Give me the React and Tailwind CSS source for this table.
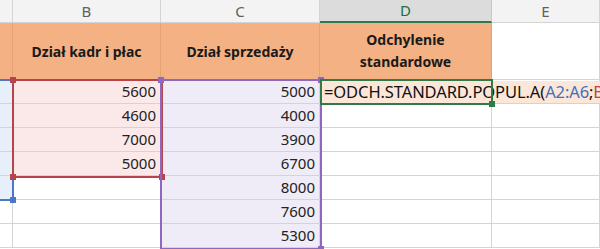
const cols = ['', 'B', 'C', 'D', 'E'];

const rows = [
  [null, '5600', '5000'],
  [null, '4600', '4000'],
  [null, '7000', '3900'],
  [null, '5000', '6700'],
  [null, '', '8000'],
  [null, '', '7600'],
  [null, '', '5300'],
];

// corner squares of a reference range, placed on the range frame
const Handle = ({ className }) => (
  <div className={`absolute w-[6px] h-[6px] ${className}`}></div>
);

const App = () => {
  return (
    <div className="w-[600px] h-[249px] overflow-hidden bg-white" style={{ fontFamily: '"Noto Sans", "Liberation Sans", sans-serif' }}>
      <div className="relative grid grid-cols-[13px_148px_159px_172px_108px] grid-rows-[23px_57px_repeat(7,24px)] w-[600px]">
        {/* column letters */}
        {cols.map((c, i) => (
          <div
            key={c + i}
            className={`flex items-center justify-center text-[15px] border-r border-b ${
              c === 'D'
                ? 'bg-[#dcdcdc] text-[#1e6e3f] border-r-[#c8c8c8] border-b-2 border-b-[#2f7a4a]'
                : 'bg-[#f3f3f3] text-[#5f5f5f] border-[#d4d4d4]'
            }`}
          >
            {c}
          </div>
        ))}

        {/* row 1 headers */}
        <div className="bg-[#f4b183] border-r border-b border-[#e5a273]"></div>
        <div className="bg-[#f4b183] border-r border-b border-[#e5a273] flex items-center justify-center font-bold text-[14px] text-[#1a1a1a]">
          Dział kadr i płac
        </div>
        <div className="bg-[#f4b183] border-r border-b border-[#e5a273] flex items-center justify-center font-bold text-[14px] text-[#1a1a1a]">
          Dział sprzedaży
        </div>
        <div className="bg-[#f4b183] border-r border-b border-[#e5a273] flex flex-col items-center justify-center font-bold text-[14px] leading-[22px] text-[#1a1a1a]">
          <span>Odchylenie</span>
          <span>standardowe</span>
        </div>
        <div className="bg-white border-r border-b border-[#d4d4d4]"></div>

        {/* data rows */}
        {rows.map((r, i) => (
          <div key={i} className="contents">
            <div className={`border-r border-b border-[#d4d4d4] ${i < 5 ? 'bg-[#e7effb]' : 'bg-white'}`}></div>
            <div className={`border-r border-b border-[#d4d4d4] flex items-center justify-end pr-[4px] text-[15px] text-[#222] ${i < 4 ? 'bg-[#fbe9e9]' : 'bg-white'}`}>
              {r[1]}
            </div>
            <div className="border-r border-b border-[#d4d4d4] flex items-center justify-end pr-[4px] text-[15px] text-[#222] bg-[#efebf7]">
              {r[2]}
            </div>
            <div className="border-r border-b border-[#d4d4d4] bg-white"></div>
            <div className="border-r border-b border-[#d4d4d4] bg-white"></div>
          </div>
        ))}

        {/* range A2:A6 */}
        <div className="absolute left-[-4px] top-[79px] w-[18px] h-[122px] border-2 border-[#4a78c6]">
          <Handle className="right-[-4px] bottom-[-4px] bg-[#4a78c6]" />
        </div>

        {/* range B2:B5 */}
        <div className="absolute left-[12px] top-[79px] w-[151px] h-[99px] border-2 border-[#b8434b]">
          <Handle className="left-[-4px] top-[-4px] bg-[#b8434b]" />
          <Handle className="left-[-4px] bottom-[-4px] bg-[#b8434b]" />
          <Handle className="right-[-4px] bottom-[-4px] bg-[#b8434b]" />
        </div>

        {/* range C2:C8 */}
        <div className="absolute left-[160px] top-[79px] w-[162px] h-[171px] border-2 border-[#8c68c0]">
          <Handle className="left-[-4px] top-[-4px] bg-[#8c68c0]" />
          <Handle className="right-[-4px] top-[-4px] bg-[#8c68c0]" />
          <Handle className="right-[-4px] bottom-[-4px] bg-[#8c68c0]" />
        </div>

        {/* active cell D2 in edit mode */}
        <div className="absolute left-[322px] top-[81px] w-[290px] h-[22px] bg-[#fce6d8] flex items-center pl-[2px] whitespace-nowrap text-[16.5px] tracking-[-0.1px] text-[#111]">
          =ODCH.STANDARD.POPUL.A(<span className="text-[#3f6fc0]">A2:A6</span>;<span className="text-[#c0463f]">B2</span>
        </div>
        <div className="absolute left-[320px] top-[79px] w-[173px] h-[26px] border-2 border-[#2f7a4a]">
          <Handle className="right-[-4px] bottom-[-4px] bg-[#2f7a4a]" />
        </div>
      </div>
    </div>
  );
};

export default App;
